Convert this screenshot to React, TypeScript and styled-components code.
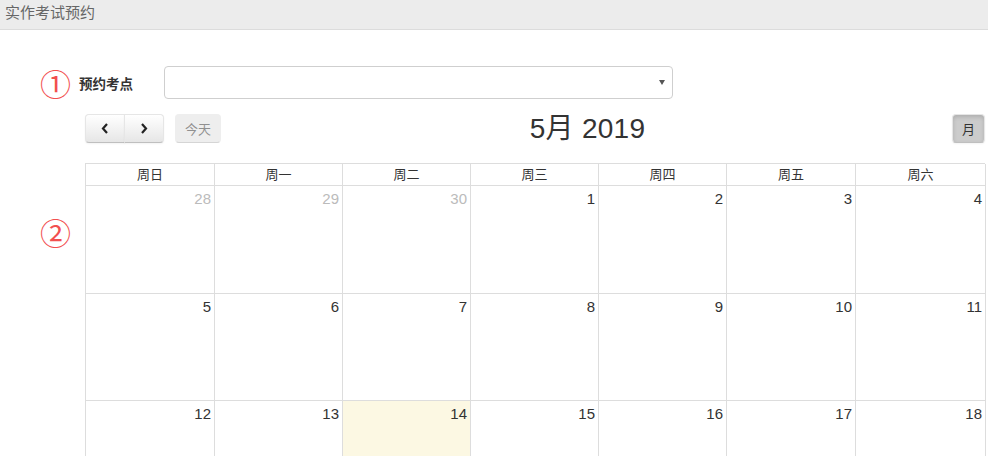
import React from "react";
import styled, { createGlobalStyle, css } from "styled-components";

const GlobalStyle = createGlobalStyle`
  html, body {
    margin: 0;
    padding: 0;
    overflow: hidden;
    background: #fff;
  }
  body {
    font-family: "Liberation Sans", "Noto Sans CJK SC", sans-serif;
    color: #333;
  }
  * { box-sizing: border-box; }
`;

const Page = styled.div`
  width: 988px;
  height: 456px;
  overflow: hidden;
`;

const TitleBar = styled.div`
  height: 30px;
  background: #ececec;
  border-bottom: 1px solid #dcdcdc;
  padding-left: 5px;
  font-size: 15px;
  line-height: 26px;
  color: #666;
`;

const Content = styled.div`
  padding-top: 36px;
`;

const FormRow = styled.div`
  display: flex;
  align-items: center;
  height: 33px;
  padding-left: 40px;
`;

const StepMark = styled.span`
  display: inline-block;
  width: 34px;
  font-family: "Noto Sans CJK SC", sans-serif;
  font-size: 31px;
  line-height: 33px;
  color: #f24f4f;
  font-weight: 400;
`;

const FieldLabel = styled.span`
  width: 90px;
  padding-left: 5px;
  font-size: 13.5px;
  font-weight: bold;
  color: #333;
`;

const SelectBox = styled.div`
  width: 509px;
  height: 33px;
  border: 1px solid #cfcfcf;
  border-radius: 4px;
  background: #fff;
  display: flex;
  align-items: center;
  justify-content: flex-end;
  padding-right: 7px;
`;

const Caret = styled.span`
  width: 0;
  height: 0;
  border-left: 3px solid transparent;
  border-right: 3px solid transparent;
  border-top: 5px solid #555;
`;

const CalendarRow = styled.div`
  display: flex;
  margin-top: 15px;
`;

const Gutter = styled.div`
  width: 85px;
  flex: none;
  padding-left: 40px;
  padding-top: 101px;
`;

const CalendarArea = styled.div`
  width: 900px;
  flex: none;
`;

const Toolbar = styled.div`
  display: flex;
  align-items: center;
  height: 29px;
  margin-bottom: 20px;
`;

const ToolGroup = styled.div`
  display: flex;
  align-items: center;
`;

const ButtonGroup = styled.div`
  display: flex;
`;

const ToolButton = styled.button<{ $pos?: "left" | "right" | "single"; $active?: boolean; $disabled?: boolean }>`
  height: 29px;
  padding: 0 9px;
  margin: 0;
  font-family: "Noto Sans CJK SC", sans-serif;
  font-size: 13px;
  color: #333;
  background-color: #f5f5f5;
  background-image: linear-gradient(to bottom, #fff, #e6e6e6);
  border: 1px solid;
  border-color: #e6e6e6 #e6e6e6 #bfbfbf;
  box-shadow: inset 0 1px 0 rgba(255, 255, 255, 0.2), 0 1px 2px rgba(0, 0, 0, 0.05);
  border-radius: ${({ $pos }) =>
    $pos === "left" ? "4px 0 0 4px" : $pos === "right" ? "0 4px 4px 0" : "4px"};
  display: flex;
  align-items: center;
  justify-content: center;
  ${({ $pos }) => $pos === "right" && css`margin-left: -1px;`}
  ${({ $active }) =>
    $active &&
    css`
      background-color: #ccc;
      background-image: none;
      box-shadow: inset 0 2px 4px rgba(0, 0, 0, 0.15), 0 1px 2px rgba(0, 0, 0, 0.05);
    `}
  ${({ $disabled }) =>
    $disabled &&
    css`
      opacity: 0.65;
      background-image: none;
      background-color: #e6e6e6;
      box-shadow: none;
      color: #555;
    `}
`;

const NavButton = styled(ToolButton)`
  width: 40px;
  padding: 0;
`;

const TodayButton = styled(ToolButton)`
  margin-left: 11px;
  width: 46px;
`;

const MonthButton = styled(ToolButton)`
  width: 33px;
  padding: 0;
`;

const Heading = styled.h2`
  flex: 1;
  margin: 0;
  text-align: center;
  font-size: 28px;
  font-weight: normal;
  line-height: 29px;
  letter-spacing: 0.3px;
  color: #333;
  padding-left: 2px;
`;

const Grid = styled.div`
  display: grid;
  grid-template-columns: 129px 128px 128px 128px 128px 129px 130px;
  grid-auto-rows: auto;
  border-top: 1px solid #ddd;
  border-left: 1px solid #ddd;
  width: 900px;
`;

const HeadCell = styled.div`
  height: 22px;
  border-right: 1px solid #ddd;
  border-bottom: 1px solid #ddd;
  text-align: center;
  font-family: "Noto Sans CJK SC", sans-serif;
  font-size: 13px;
  line-height: 20px;
  color: #333;
`;

const DayCell = styled.div<{ $other?: boolean; $today?: boolean }>`
  height: 107.5px;
  border-right: 1px solid #ddd;
  border-bottom: 1px solid #ddd;
  text-align: right;
  padding: 4px 3px 0 0;
  font-size: 15px;
  line-height: 18px;
  color: ${({ $other }) => ($other ? "#bbb" : "#333")};
  background: ${({ $today }) => ($today ? "#fcf8e3" : "#fff")};
`;

const Chevron = ({ dir }: { dir: "left" | "right" }) => (
  <svg width="8" height="11" viewBox="0 0 8 11">
    <path
      d={dir === "left" ? "M6 1 L2 5.5 L6 10" : "M2 1 L6 5.5 L2 10"}
      fill="none"
      stroke="#222"
      strokeWidth="2.2"
    />
  </svg>
);

const weekdays = ["周日", "周一", "周二", "周三", "周四", "周五", "周六"];

type Day = { n: number; other?: boolean; today?: boolean };

const buildWeeks = (): Day[][] => {
  const days: Day[] = [];
  [28, 29, 30].forEach((n) => days.push({ n, other: true }));
  for (let i = 1; i <= 31; i++) days.push({ n: i, today: i === 14 });
  let j = 1;
  while (days.length < 35) days.push({ n: j++, other: true });
  const weeks: Day[][] = [];
  for (let w = 0; w < 5; w++) weeks.push(days.slice(w * 7, w * 7 + 7));
  return weeks;
};

export default function App() {
  const weeks = buildWeeks();
  return (
    <Page>
      <GlobalStyle />
      <TitleBar>实作考试预约</TitleBar>
      <Content>
        <FormRow>
          <StepMark>①</StepMark>
          <FieldLabel>预约考点</FieldLabel>
          <SelectBox>
            <Caret />
          </SelectBox>
        </FormRow>
        <CalendarRow>
          <Gutter>
            <StepMark>②</StepMark>
          </Gutter>
          <CalendarArea>
            <Toolbar>
              <ToolGroup>
                <ButtonGroup>
                  <NavButton $pos="left">
                    <Chevron dir="left" />
                  </NavButton>
                  <NavButton $pos="right">
                    <Chevron dir="right" />
                  </NavButton>
                </ButtonGroup>
                <TodayButton $disabled>今天</TodayButton>
              </ToolGroup>
              <Heading>5月 2019</Heading>
              <ToolGroup>
                <MonthButton $active>月</MonthButton>
              </ToolGroup>
            </Toolbar>
            <Grid>
              {weekdays.map((d) => (
                <HeadCell key={d}>{d}</HeadCell>
              ))}
              {weeks.map((week, wi) =>
                week.map((day, di) => (
                  <DayCell key={`${wi}-${di}`} $other={day.other} $today={day.today}>
                    {day.n}
                  </DayCell>
                ))
              )}
            </Grid>
          </CalendarArea>
        </CalendarRow>
      </Content>
    </Page>
  );
}
